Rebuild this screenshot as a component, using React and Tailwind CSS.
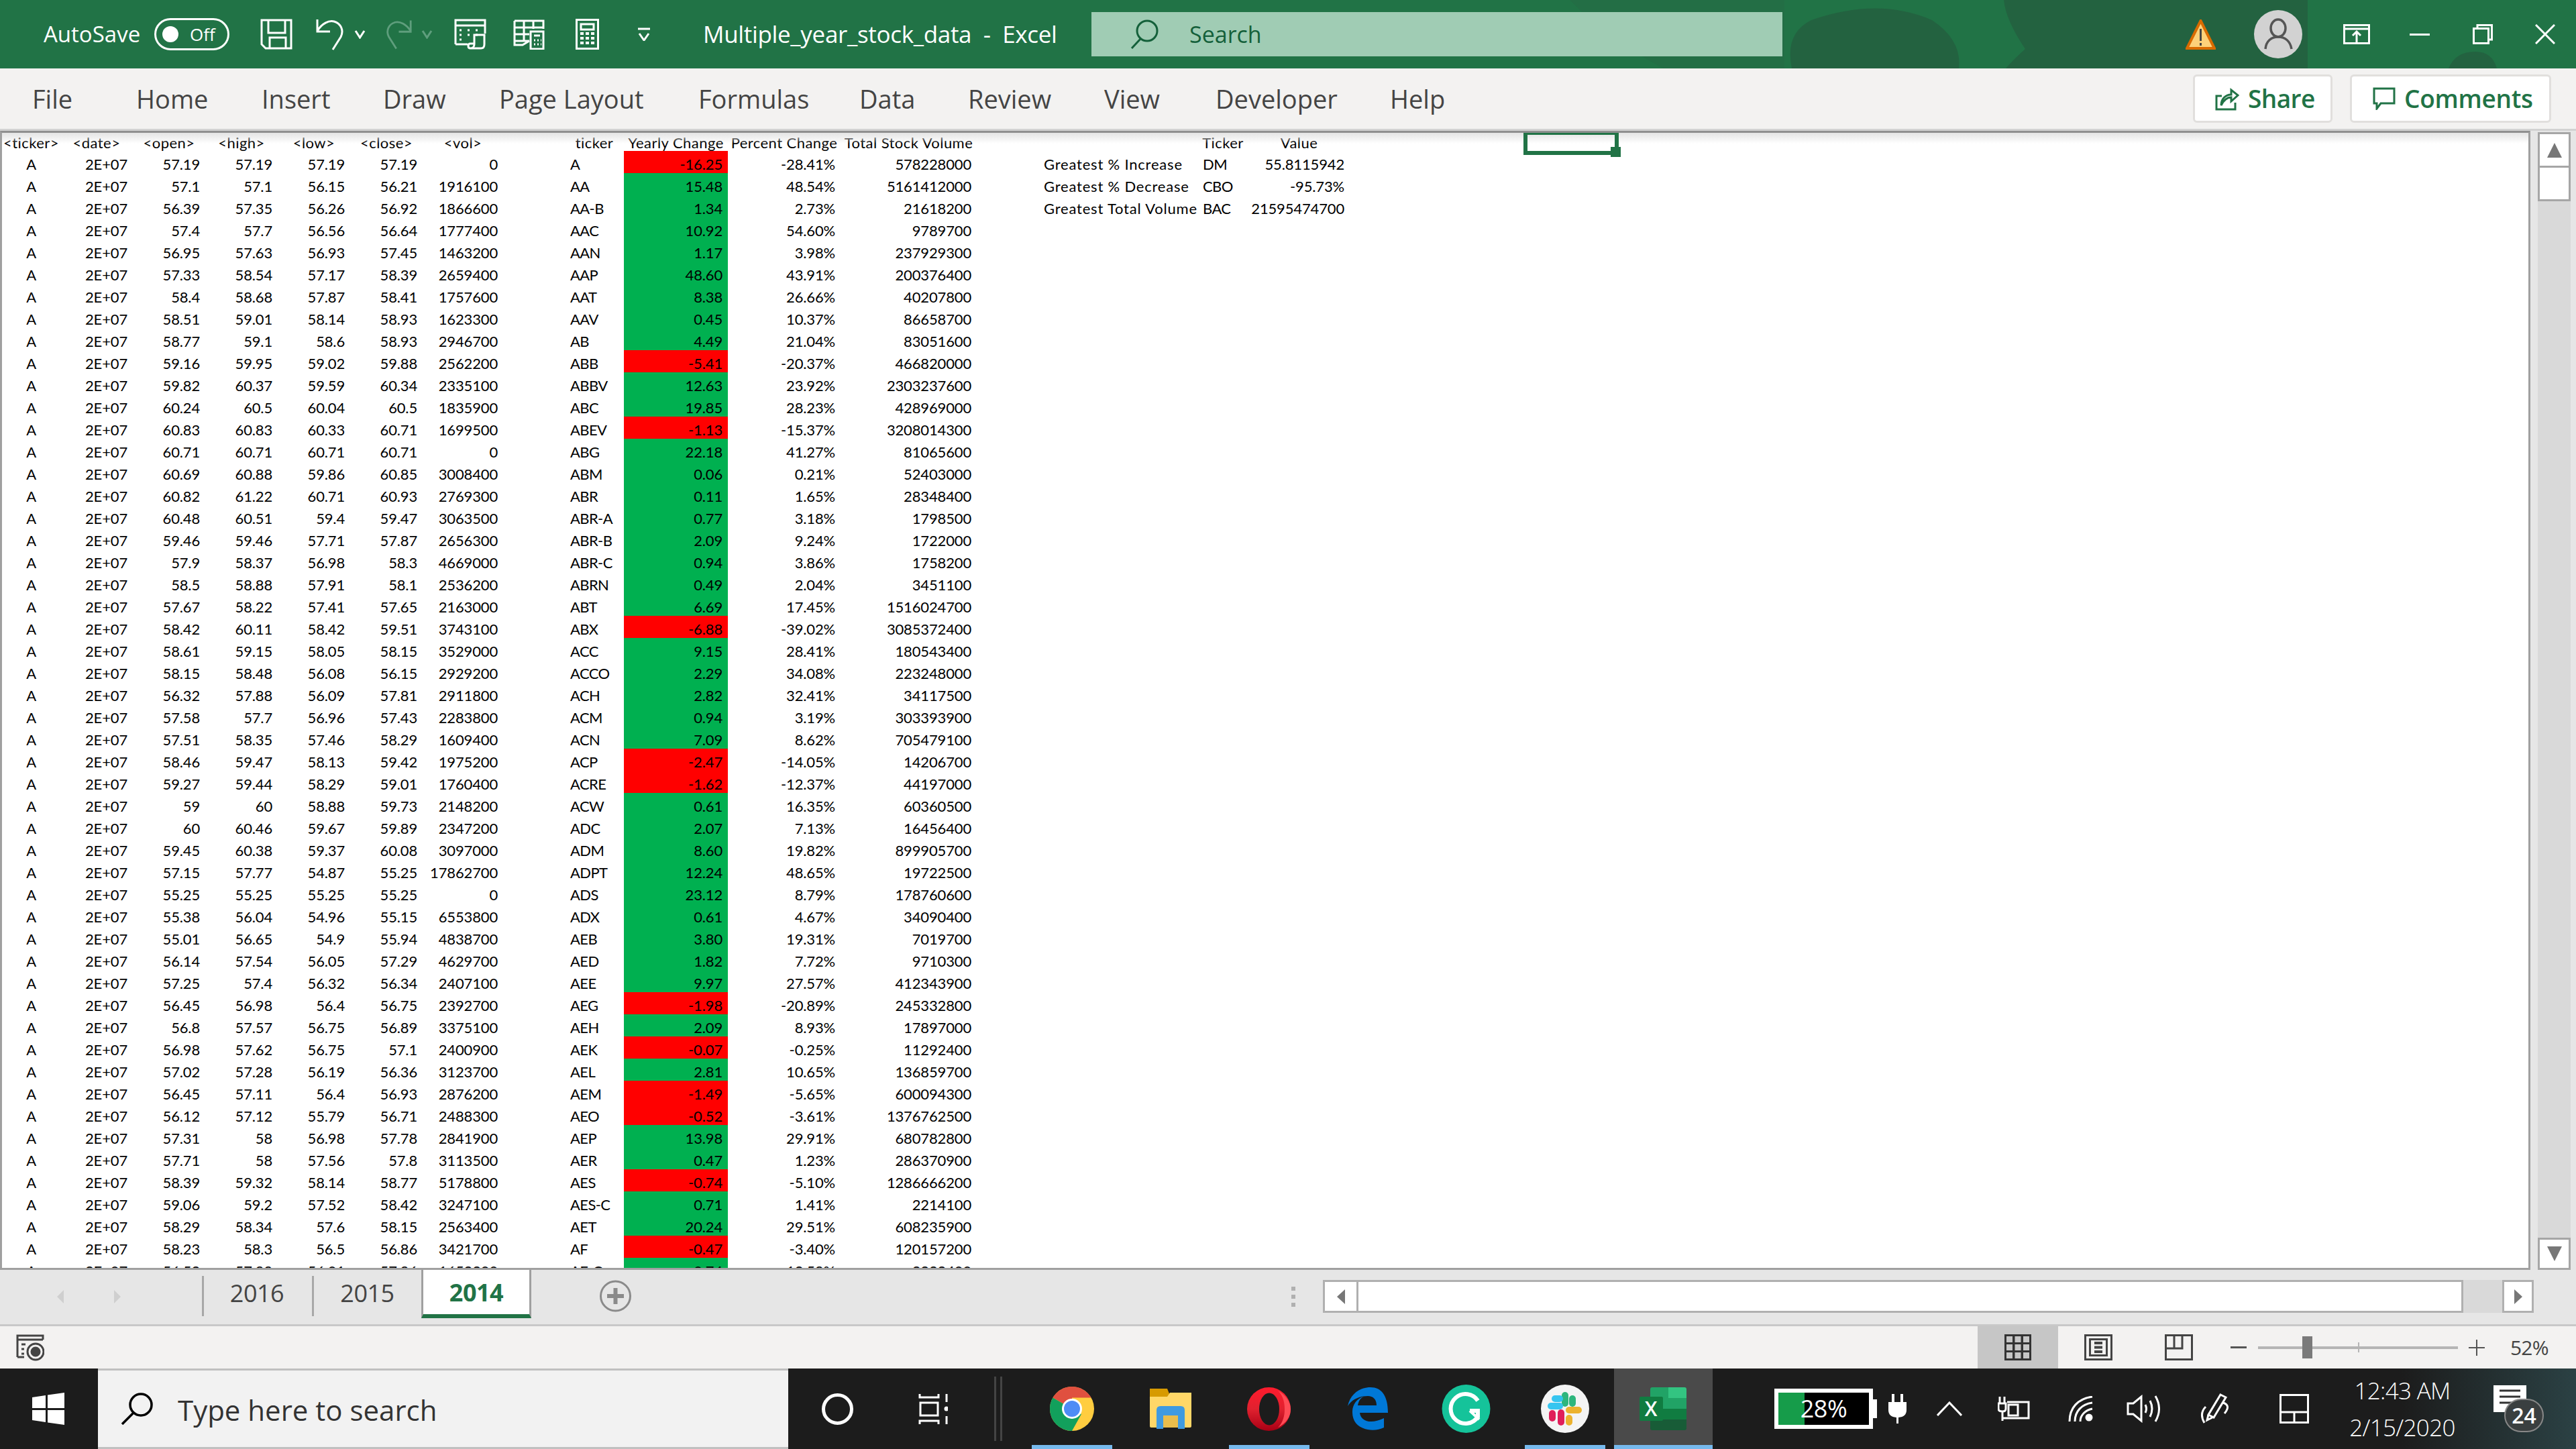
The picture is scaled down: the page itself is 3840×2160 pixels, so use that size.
import React from "react";

const raw = `57.19 57.19 57.19 57.19 0 A -16.25 -28.41% 578228000
57.1 57.1 56.15 56.21 1916100 AA 15.48 48.54% 5161412000
56.39 57.35 56.26 56.92 1866600 AA-B 1.34 2.73% 21618200
57.4 57.7 56.56 56.64 1777400 AAC 10.92 54.60% 9789700
56.95 57.63 56.93 57.45 1463200 AAN 1.17 3.98% 237929300
57.33 58.54 57.17 58.39 2659400 AAP 48.60 43.91% 200376400
58.4 58.68 57.87 58.41 1757600 AAT 8.38 26.66% 40207800
58.51 59.01 58.14 58.93 1623300 AAV 0.45 10.37% 86658700
58.77 59.1 58.6 58.93 2946700 AB 4.49 21.04% 83051600
59.16 59.95 59.02 59.88 2562200 ABB -5.41 -20.37% 466820000
59.82 60.37 59.59 60.34 2335100 ABBV 12.63 23.92% 2303237600
60.24 60.5 60.04 60.5 1835900 ABC 19.85 28.23% 428969000
60.83 60.83 60.33 60.71 1699500 ABEV -1.13 -15.37% 3208014300
60.71 60.71 60.71 60.71 0 ABG 22.18 41.27% 81065600
60.69 60.88 59.86 60.85 3008400 ABM 0.06 0.21% 52403000
60.82 61.22 60.71 60.93 2769300 ABR 0.11 1.65% 28348400
60.48 60.51 59.4 59.47 3063500 ABR-A 0.77 3.18% 1798500
59.46 59.46 57.71 57.87 2656300 ABR-B 2.09 9.24% 1722000
57.9 58.37 56.98 58.3 4669000 ABR-C 0.94 3.86% 1758200
58.5 58.88 57.91 58.1 2536200 ABRN 0.49 2.04% 3451100
57.67 58.22 57.41 57.65 2163000 ABT 6.69 17.45% 1516024700
58.42 60.11 58.42 59.51 3743100 ABX -6.88 -39.02% 3085372400
58.61 59.15 58.05 58.15 3529000 ACC 9.15 28.41% 180543400
58.15 58.48 56.08 56.15 2929200 ACCO 2.29 34.08% 223248000
56.32 57.88 56.09 57.81 2911800 ACH 2.82 32.41% 34117500
57.58 57.7 56.96 57.43 2283800 ACM 0.94 3.19% 303393900
57.51 58.35 57.46 58.29 1609400 ACN 7.09 8.62% 705479100
58.46 59.47 58.13 59.42 1975200 ACP -2.47 -14.05% 14206700
59.27 59.44 58.29 59.01 1760400 ACRE -1.62 -12.37% 44197000
59 60 58.88 59.73 2148200 ACW 0.61 16.35% 60360500
60 60.46 59.67 59.89 2347200 ADC 2.07 7.13% 16456400
59.45 60.38 59.37 60.08 3097000 ADM 8.60 19.82% 899905700
57.15 57.77 54.87 55.25 17862700 ADPT 12.24 48.65% 19722500
55.25 55.25 55.25 55.25 0 ADS 23.12 8.79% 178760600
55.38 56.04 54.96 55.15 6553800 ADX 0.61 4.67% 34090400
55.01 56.65 54.9 55.94 4838700 AEB 3.80 19.31% 7019700
56.14 57.54 56.05 57.29 4629700 AED 1.82 7.72% 9710300
57.25 57.4 56.32 56.34 2407100 AEE 9.97 27.57% 412343900
56.45 56.98 56.4 56.75 2392700 AEG -1.98 -20.89% 245332800
56.8 57.57 56.75 56.89 3375100 AEH 2.09 8.93% 17897000
56.98 57.62 56.75 57.1 2400900 AEK -0.07 -0.25% 11292400
57.02 57.28 56.19 56.36 3123700 AEL 2.81 10.65% 136859700
56.45 57.11 56.4 56.93 2876200 AEM -1.49 -5.65% 600094300
56.12 57.12 55.79 56.71 2488300 AEO -0.52 -3.61% 1376762500
57.31 58 56.98 57.78 2841900 AEP 13.98 29.91% 680782800
57.71 58 57.56 57.8 3113500 AER 0.47 1.23% 286370900
58.39 59.32 58.14 58.77 5178800 AES -0.74 -5.10% 1286666200
59.06 59.2 57.52 58.42 3247100 AES-C 0.71 1.41% 2214100
58.29 58.34 57.6 58.15 2563400 AET 20.24 29.51% 608235900
58.23 58.3 56.5 56.86 3421700 AF -0.47 -3.40% 120157200
56.52 57.88 56.01 57.86 1652300 AF-C 0.74 12.58% 2222400`
  .split("\n")
  .map((l) => l.split(" "));

const GRID =
  "grid grid-cols-[87px_108px_108px_108px_108px_108px_120px_92px_88px_155px_168px_203px_92px_237px_76px_151px]";
const R = "text-right pr-[8px]";
const L = "text-left pl-[8px] tracking-[-0.6px]";
const H = "text-center whitespace-nowrap tracking-[0.45px]";

const side = [
  ["Greatest % Increase", "DM", "55.8115942"],
  ["Greatest % Decrease", "CBO", "-95.73%"],
  ["Greatest Total Volume", "BAC", "21595474700"],
];

function HeaderRow() {
  const heads = ["<ticker>", "<date>", "<open>", "<high>", "<low>", "<close>", "<vol>", "", "ticker", "Yearly Change", "Percent Change", "Total Stock Volume", "", "", "Ticker", "Value"];
  return (
    <div className={`${GRID} h-[27px] leading-[30px]`}>
      {heads.map((h, i) => (
        <div key={i} className={H}>{h}</div>
      ))}
    </div>
  );
}

function Row({ d, i }) {
  const s = side[i];
  const neg = d[6].startsWith("-");
  return (
    <div className={`${GRID} h-[33px] leading-[39px] overflow-hidden`}>
      <div className="text-center">A</div>
      <div className={R}>2E+07</div>
      <div className={R}>{d[0]}</div>
      <div className={R}>{d[1]}</div>
      <div className={R}>{d[2]}</div>
      <div className={R}>{d[3]}</div>
      <div className={R}>{d[4]}</div>
      <div />
      <div className={L}>{d[5]}</div>
      <div className={`${R} ${neg ? "bg-[#ff0000]" : "bg-[#00b050]"}`}>{d[6]}</div>
      <div className={R}>{d[7]}</div>
      <div className={R}>{d[8]}</div>
      <div />
      <div className="text-left pl-[8px] whitespace-nowrap tracking-[0.8px]">{s ? s[0] : ""}</div>
      <div className={L}>{s ? s[1] : ""}</div>
      <div className={R}>{s ? s[2] : ""}</div>
    </div>
  );
}

const W = { stroke: "#fff", strokeWidth: 3, fill: "none" };

function TitleIcons() {
  return (
    <>
      <svg className="ml-[46px] w-[48px] h-[46px] shrink-0" viewBox="0 0 48 46" {...W}>
        <path d="M2 2H46V44H8L2 38Z" />
        <path d="M12 2V21H37V2M14 44V28H38V44" />
      </svg>
      <svg className="ml-[34px] w-[45px] h-[48px] shrink-0" viewBox="0 0 45 48" {...W}>
        <path d="M3 2V20H22M3 19C10 8 20 3 28 5C38 8 43 18 38 28L26 47" />
      </svg>
      <svg className="ml-[13px] w-[17px] h-[14px] shrink-0" viewBox="0 0 17 14" {...W}><path d="M2 2L8.500 12L15 2" /></svg>
      <svg className="ml-[28px] w-[42px] h-[48px] shrink-0" viewBox="0 0 45 48" fill="none" stroke="#5f9e7d" strokeWidth="3">
        <path d="M42 2V20H23M42 19C35 8 25 3 17 5C7 8 2 18 7 28L19 47" />
      </svg>
      <svg className="ml-[13px] w-[17px] h-[14px] shrink-0" viewBox="0 0 17 14" fill="none" stroke="#5f9e7d" strokeWidth="3"><path d="M2 2L8.500 12L15 2" /></svg>
      <svg className="ml-[32px] w-[48px] h-[46px] shrink-0" viewBox="0 0 48 46" {...W}>
        <path d="M2 38V2H46V22M2 10H46M2 38H20" />
        <path d="M8 17H14M20 17H26M32 17H38M8 24H14M8 31H14M20 24H26M32 24H38" strokeDasharray="3 3" />
        <path d="M24 44H40C44 44 45 41 45 38V24H30V38C30 41 28 44 24 44ZM24 44C20 44 20 37 24 37H30" />
      </svg>
      <svg className="ml-[40px] w-[47px] h-[45px] shrink-0" viewBox="0 0 47 45" {...W}>
        <path d="M2 2H45V14M2 2V32M2 12H45M16 2V22M30 2V14M2 22H24M2 32H24M16 22V32M2 32V38H14L24 32" />
        <path d="M26 18H45V44H26Z" />
        <path d="M31 24H40M31 31H33M36 31H38M41 31H42M31 37H33M36 37H38M41 37H42" />
      </svg>
      <svg className="ml-[46px] w-[35px] h-[46px] shrink-0" viewBox="0 0 35 46" {...W}>
        <rect x="1.500" y="1.500" width="32" height="43" />
        <rect x="8" y="8" width="19" height="8" />
        <path d="M7 22H12M15 22H20M23 22H28M7 29H12M15 29H20M23 29H28M7 36H12M15 36H20M23 36H28" strokeWidth="4" />
      </svg>
      <svg className="ml-[57px] w-[20px] h-[20px] shrink-0" viewBox="0 0 20 20" {...W}><path d="M1 2H19M3 9L10 19L17 9" /></svg>
    </>
  );
}

function Chrome() {
  return (
    <svg className="w-[66px] h-[66px]" viewBox="0 0 66 66">
      <circle cx="33" cy="33" r="33" fill="#ffcd40" />
      <path d="M33 33L4.400 16.500A33 33 0 0 1 61.600 16.500H33Z" fill="#e0503f" />
      <path d="M33 33L4.400 16.500A33 33 0 0 0 33 66L47 41Z" fill="#12a05c" />
      <circle cx="33" cy="33" r="15" fill="#fff" />
      <circle cx="33" cy="33" r="12" fill="#4e8cf5" />
    </svg>
  );
}
function Files() {
  return (
    <svg className="w-[62px] h-[60px]" viewBox="0 0 62 60">
      <path d="M0 0H26L30 10V18H0Z" fill="#d79a00" />
      <path d="M0 12H26L30 6H62V56Q62 58 60 58H2Q0 58 0 56Z" fill="#ffd768" />
      <path d="M10 60V32Q10 26 16 26H46Q52 26 52 32V60H42V40H20V60Z" fill="#3f9ae0" />
      <rect x="20" y="40" width="22" height="18" fill="#e9bd4c" />
    </svg>
  );
}
function Opera() {
  return (
    <svg className="w-[65px] h-[65px]" viewBox="0 0 65 65">
      <defs>
        <linearGradient id="op" x1="0" y1="0" x2="0" y2="1">
          <stop offset="0" stopColor="#ff1b2d" />
          <stop offset="0.5" stopColor="#e0212f" />
          <stop offset="1" stopColor="#a70014" />
        </linearGradient>
      </defs>
      <circle cx="32.500" cy="32.500" r="32.500" fill="url(#op)" />
      <path d="M46 5C58 12 65 22 65 32.500C65 44 58 54 46 60C54 52 56 42 56 32.500C56 23 54 13 46 5Z" fill="#ff4b55" />
      <ellipse cx="33" cy="32.500" rx="15" ry="24" fill="#1c1c1c" />
    </svg>
  );
}
function Edge() {
  return (
    <svg className="w-[60px] h-[64px]" viewBox="0 0 60 64">
      <path d="M0 28C4 10 18 0 34 0C50 0 60 12 60 38H18C19 50 34 56 54 46V60C38 68 6 64 7 36C7 26 14 16 24 14C18 16 16 22 15 27H43C43 18 38 13 30 13C18 13 6 18 0 28Z" fill="#0078d7" />
    </svg>
  );
}
function Grammarly() {
  return (
    <svg className="w-[73px] h-[72px]" viewBox="0 0 73 72">
      <circle cx="36.500" cy="36" r="36" fill="#15c39a" />
      <path d="M54 24A22 22 0 1 0 54 48V39H42" fill="none" stroke="#fff" strokeWidth="6" />
      <path d="M42 39L56 52" stroke="#fff" strokeWidth="4" />
    </svg>
  );
}
function Slack() {
  return (
    <svg className="w-[72px] h-[72px]" viewBox="0 0 72 72">
      <circle cx="36" cy="36" r="36" fill="#f4f4f4" />
      <g strokeLinecap="round" strokeWidth="10" fill="none">
        <path d="M36 16V28" stroke="#2eb67d" />
        <path d="M47 21V28" stroke="#2eb67d" />
        <path d="M15 32H28" stroke="#36c5f0" />
        <path d="M21 21H28" stroke="#36c5f0" />
        <path d="M30 42V56" stroke="#e01e5a" />
        <path d="M17 43V50" stroke="#e01e5a" />
        <path d="M42 38H56" stroke="#ecb22e" />
        <path d="M42 50V56" stroke="#ecb22e" />
      </g>
    </svg>
  );
}
function Excel() {
  return (
    <div className="relative w-[72px] h-[64px]">
      <div className="absolute left-[16px] top-0 w-[54px] h-[64px] grid grid-cols-2 grid-rows-4 rounded-[3px] overflow-hidden">
        <div className="bg-[#21a366]" /><div className="bg-[#33c481]" />
        <div className="bg-[#21a366]" /><div className="bg-[#21a366]" />
        <div className="bg-[#107c41]" /><div className="bg-[#107c41]" />
        <div className="bg-[#185c37] col-span-2" />
      </div>
      <div className="absolute left-0 top-[14px] w-[35px] h-[36px] bg-[#107c41] rounded-[2px] flex items-center justify-center text-white text-[30px] font-semibold leading-none">X</div>
    </div>
  );
}

function Slot({ bar, active, children }) {
  return (
    <div className={`relative w-[147px] h-full flex items-center justify-center shrink-0 ${active ? "bg-[#4a4a4a]" : ""}`}>
      {children}
      {bar && <div className={`absolute bottom-0 h-[6px] bg-[#76b9ed] ${active ? "w-full" : "w-[120px]"}`} />}
    </div>
  );
}

export default function App() {
  return (
    <div className="w-[3840px] h-[2160px] overflow-hidden flex flex-col bg-white font-['Open_Sans',sans-serif]">
      {/* Title bar */}
      <div className="relative h-[102px] shrink-0 bg-[#217346] flex items-center pl-[65px] text-white">
        <svg className="absolute left-0 top-0 w-[3840px] h-[102px]" viewBox="0 0 3840 102">
          <path d="M2340 0H2660V102H2480Q2400 60 2340 0Z" fill="#236e45" />
          <path d="M2671 102Q2660 50 2700 30Q2800 -5 2880 30Q2925 60 2920 102Z" fill="#236240" />
          <path d="M2987 0H3440V102H2990Q3000 90 3019 73Q2990 30 2987 0Z" fill="#236240" />
          <path d="M3650 102Q3660 77 3690 77Q3715 77 3722 102Z" fill="#236240" />
        </svg>
        <div className="relative flex items-center">
          <span className="w-[146px] text-[33px] whitespace-nowrap">AutoSave</span>
          <div className="ml-[19px] w-[112px] h-[48px] border-[3px] border-white rounded-full flex items-center pl-[9px] shrink-0">
            <div className="w-[24px] h-[24px] bg-white rounded-full" />
            <span className="ml-[17px] text-[26px] leading-none">Off</span>
          </div>
          <TitleIcons />
          <span className="ml-[78px] w-[526px] text-[35px] whitespace-pre tracking-[-0.33px]">Multiple_year_stock_data  -  Excel</span>
          <div className="ml-[53px] w-[1030px] h-[66px] bg-[#a0ccb4] flex items-center pl-[58px] shrink-0 text-[#14603a]">
            <svg className="w-[42px] h-[44px] shrink-0" viewBox="0 0 42 44" fill="none" stroke="#14603a" strokeWidth="3">
              <circle cx="25" cy="17" r="15" />
              <path d="M15 29L2 43" />
            </svg>
            <span className="ml-[46px] text-[34px]">Search</span>
          </div>
          <svg className="ml-[601px] w-[45px] h-[45px] shrink-0" viewBox="0 0 45 45">
            <path d="M22.500 2L43 43H2Z" fill="#fdd17a" stroke="#d96b00" strokeWidth="4" />
            <path d="M22.500 14V32M22.500 35V39" stroke="#444" strokeWidth="3" />
          </svg>
          <svg className="ml-[57px] w-[72px] h-[72px] shrink-0" viewBox="0 0 72 72">
            <circle cx="36" cy="36" r="36" fill="#d2d2d2" />
            <ellipse cx="36" cy="27" rx="11" ry="13" fill="none" stroke="#555" strokeWidth="3.500" />
            <path d="M17 58C18 46 26 40 36 40C46 40 54 46 56 58" fill="none" stroke="#555" strokeWidth="3.500" />
          </svg>
          <svg className="ml-[61px] w-[40px] h-[30px] shrink-0" viewBox="0 0 40 30" {...W}>
            <rect x="1.500" y="1.500" width="37" height="27" />
            <path d="M2 7H38M20 29V12M14 17L20 11L26 17" />
          </svg>
          <div className="ml-[59px] w-[30px] h-[3px] bg-white shrink-0" />
          <svg className="ml-[64px] w-[30px] h-[30px] shrink-0" viewBox="0 0 30 30" {...W}>
            <rect x="1.500" y="6.500" width="22" height="22" />
            <path d="M7 6V1.500H28.500V23H24" />
          </svg>
          <svg className="ml-[63px] w-[30px] h-[30px] shrink-0" viewBox="0 0 30 30" {...W}>
            <path d="M1 1L29 29M29 1L1 29" />
          </svg>
        </div>
      </div>

      {/* Ribbon tabs */}
      <div className="h-[90px] shrink-0 bg-[#f3f2f1] flex items-center pl-[48px] text-[#444] text-[38px] whitespace-nowrap">
        <span className="w-[155px]">File</span>
        <span className="w-[187px]">Home</span>
        <span className="w-[181px]">Insert</span>
        <span className="w-[173px]">Draw</span>
        <span className="w-[297px]">Page Layout</span>
        <span className="w-[240px]">Formulas</span>
        <span className="w-[162px]">Data</span>
        <span className="w-[203px]">Review</span>
        <span className="w-[166px]">View</span>
        <span className="w-[260px]">Developer</span>
        <span className="w-[100px]">Help</span>
        <div className="ml-auto w-[208px] h-[72px] bg-white border-[3px] border-[#e1dfdd] rounded-[6px] flex items-center pl-[30px] text-[#217346] font-semibold">
          <svg className="w-[36px] h-[36px] shrink-0" viewBox="0 0 36 36" fill="none" stroke="#217346" strokeWidth="3">
            <path d="M10 14H2V34H30V24" />
            <path d="M9 28C9 18 16 12 24 12V5L34 13L24 22V16C18 16 13 20 9 28Z" />
          </svg>
          <span className="ml-[13px] text-[37px] tracking-[-0.6px]">Share</span>
        </div>
        <div className="ml-[26px] mr-[37px] w-[300px] h-[72px] bg-white border-[3px] border-[#e1dfdd] rounded-[6px] flex items-center pl-[31px] text-[#217346] font-semibold">
          <svg className="w-[34px] h-[34px] shrink-0" viewBox="0 0 34 34" fill="none" stroke="#217346" strokeWidth="3">
            <path d="M2 2H32V24H12L6 32V24H2Z" />
          </svg>
          <span className="ml-[13px] text-[37px] tracking-[-0.3px]">Comments</span>
        </div>
      </div>
      <div className="h-[3px] shrink-0 bg-[#d2d2d2]" />

      {/* Sheet */}
      <div className="h-[1698px] shrink-0 flex">
        <div className="relative w-[3772px] shrink-0 border-t-[3px] border-l-[3px] border-r-[3px] border-b-[3px] border-t-[#8f8f8f] border-x-[#a0a0a0] border-b-[#a0a0a0] overflow-hidden text-black text-[22px] tracking-[-0.15px] font-['Lato',sans-serif]">
          <HeaderRow />
          {raw.map((d, i) => (
            <Row key={i} d={d} i={i} />
          ))}
          <div className="absolute left-0 top-0 right-0 h-[16px] bg-gradient-to-b from-[#e4e4e4] to-transparent" />
          <div className="absolute left-[2268px] top-[-3px] w-[142px] h-[36px] border-[6px] border-[#217346]" />
          <div className="absolute left-[2398px] top-[21px] w-[15px] h-[15px] bg-[#217346]" />
        </div>
        <div className="flex-1 bg-[#e6e6e6] pl-[11px] pr-[8px] flex flex-col pt-[2px]">
          <div className="h-[50px] bg-white border-[3px] border-b-0 border-[#a6a6a6] flex items-center justify-center shrink-0">
            <div className="w-0 h-0 border-x-[11px] border-x-transparent border-b-[22px] border-b-[#777]" />
          </div>
          <div className="h-[53px] bg-white border-[3px] border-[#a6a6a6] shrink-0" />
          <div className="flex-1 bg-[#d9d9d9]" />
          <div className="h-[48px] bg-white border-[3px] border-[#a6a6a6] flex items-center justify-center shrink-0">
            <div className="w-0 h-0 border-x-[11px] border-x-transparent border-t-[22px] border-t-[#777]" />
          </div>
        </div>
      </div>

      {/* Sheet tabs and scrollbar */}
      <div className="h-[81px] shrink-0 bg-[#e6e6e6] flex items-start text-[36px] text-[#444] tracking-[-0.5px]">
        <div className="ml-[85px] mt-[30px] w-0 h-0 border-y-[10px] border-y-transparent border-r-[10px] border-r-[#cfcfcf]" />
        <div className="ml-[75px] mt-[30px] w-0 h-0 border-y-[10px] border-y-transparent border-l-[10px] border-l-[#cfcfcf]" />
        <div className="ml-[121px] mt-[9px] w-[3px] h-[60px] bg-[#a8a8a8]" />
        <div className="w-[161px] h-[70px] flex items-center justify-center pr-[3px]">2016</div>
        <div className="mt-[9px] w-[3px] h-[60px] bg-[#a8a8a8]" />
        <div className="w-[160px] h-[70px] flex items-center justify-center pr-[1px]">2015</div>
        <div className="-mt-[3px] w-[164px] h-[75px] bg-white border-x-[3px] border-[#a0a0a0] border-b-[6px] border-b-[#217346] flex items-center justify-center font-bold text-[#217346] pt-[4px]">2014</div>
        <svg className="ml-[102px] mt-[15px] w-[47px] h-[48px] shrink-0" viewBox="0 0 47 48">
          <circle cx="23.500" cy="24" r="22" fill="none" stroke="#8a8a8a" strokeWidth="3" />
          <path d="M23.500 12V36M11 24H36" stroke="#8a8a8a" strokeWidth="6" />
        </svg>
        <div className="ml-[984px] mt-[25px] w-[6px] flex flex-col gap-[6px] shrink-0">
          <div className="h-[6px] bg-[#b0b0b0]" />
          <div className="h-[6px] bg-[#b0b0b0]" />
          <div className="h-[6px] bg-[#b0b0b0]" />
        </div>
        <div className="ml-[41px] mt-[15px] w-[53px] h-[49px] bg-white border-[3px] border-[#b0b0b0] flex items-center justify-center shrink-0">
          <div className="w-0 h-0 border-y-[11px] border-y-transparent border-r-[12px] border-r-[#777]" />
        </div>
        <div className="mt-[15px] w-[1647px] h-[49px] bg-white border-[3px] border-l-0 border-[#b0b0b0] shrink-0" />
        <div className="mt-[15px] w-[58px] h-[49px] bg-[#d9d9d9] shrink-0" />
        <div className="mt-[15px] w-[47px] h-[49px] bg-white border-[3px] border-[#b0b0b0] flex items-center justify-center shrink-0">
          <div className="w-0 h-0 border-y-[11px] border-y-transparent border-l-[12px] border-l-[#777]" />
        </div>
      </div>

      {/* Status bar */}
      <div className="h-[66px] shrink-0 bg-[#f3f2f1] border-t-[3px] border-[#c8c8c8] flex items-center text-[#444]">
        <svg className="ml-[24px] w-[42px] h-[40px] shrink-0" viewBox="0 0 42 40" fill="none" stroke="#444" strokeWidth="3">
          <path d="M2 34V2H40V8M2 8H40M2 34H12" />
          <path d="M8 15H14M8 22H12M8 29H12" />
          <circle cx="29" cy="26" r="12" />
          <circle cx="29" cy="26" r="6" fill="#444" />
        </svg>
        <div className="ml-[2882px] w-[120px] h-full bg-[#c6c6c6] flex items-center justify-center shrink-0">
          <svg className="w-[40px] h-[39px]" viewBox="0 0 40 39">
            <rect x="0" y="0" width="40" height="39" fill="#333" />
            <g fill="#c6c6c6">
              <rect x="3" y="3" width="9" height="9" /><rect x="15.500" y="3" width="9" height="9" /><rect x="28" y="3" width="9" height="9" />
              <rect x="3" y="15" width="9" height="9" /><rect x="15.500" y="15" width="9" height="9" /><rect x="28" y="15" width="9" height="9" />
              <rect x="3" y="27" width="9" height="9" /><rect x="15.500" y="27" width="9" height="9" /><rect x="28" y="27" width="9" height="9" />
            </g>
          </svg>
        </div>
        <svg className="ml-[39px] w-[42px] h-[39px] shrink-0" viewBox="0 0 42 39" fill="none" stroke="#444">
          <rect x="1.500" y="1.500" width="39" height="36" strokeWidth="3" />
          <rect x="8.500" y="7.500" width="25" height="24" strokeWidth="3" />
          <path d="M15 13H27M15 19.500H27M15 26H27" strokeWidth="4" />
        </svg>
        <svg className="ml-[78px] w-[42px] h-[39px] shrink-0" viewBox="0 0 42 39" fill="none" stroke="#444" strokeWidth="3">
          <rect x="1.500" y="1.500" width="39" height="36" />
          <path d="M2 21H26V2M14 2V21" />
        </svg>
        <div className="ml-[56px] w-[24px] h-[3px] bg-[#555] shrink-0" />
        <div className="ml-[17px] w-[298px] h-[4px] bg-[#b5b5b5] shrink-0 flex items-center">
          <div className="ml-[66px] w-[15px] h-[33px] bg-[#7a7a7a] shrink-0" />
          <div className="ml-[68px] w-[2px] h-[15px] bg-[#b5b5b5] shrink-0" />
        </div>
        <svg className="ml-[16px] w-[24px] h-[24px] shrink-0" viewBox="0 0 24 24" stroke="#555" strokeWidth="2">
          <path d="M0 12H24M12 0V24" />
        </svg>
        <span className="ml-[38px] text-[30px] tracking-[-0.8px]">52%</span>
      </div>

      {/* Taskbar */}
      <div className="relative h-[120px] shrink-0 bg-[#1c1c1c] flex items-center text-white">
        <div className="absolute left-[3580px] right-0 top-0 bottom-0 bg-gradient-to-r from-transparent to-[#2b4144]" />
        <svg className="ml-[48px] w-[48px] h-[48px] shrink-0" viewBox="0 0 48 48" fill="#fff">
          <path d="M0 7L20 4V23H0ZM23 3.500L48 0V23H23ZM0 26H20V44L0 41ZM23 26H48V48L23 44.500Z" />
        </svg>
        <div className="ml-[50px] w-[1029px] h-full bg-[#f2f2f2] border-y-[3px] border-[#c0c0c0] flex items-center pl-[34px] shrink-0">
          <svg className="w-[48px] h-[48px] shrink-0" viewBox="0 0 48 48" fill="none" stroke="#000" strokeWidth="3.500">
            <circle cx="30" cy="18" r="16" />
            <path d="M19 30L2 47" />
          </svg>
          <span className="ml-[37px] text-[42px] text-[#333] pt-[2px]">Type here to search</span>
        </div>
        <div className="ml-[50px] w-[47px] h-[47px] rounded-full border-[5px] border-white shrink-0" />
        <svg className="ml-[97px] w-[44px] h-[45px] shrink-0" viewBox="0 0 44 45" fill="none" stroke="#fff" strokeWidth="3">
          <path d="M2 0V5H30V0M2 45V40H30V45" />
          <rect x="3" y="13" width="26" height="19" />
          <path d="M42 0V12M42 33V45" />
          <circle cx="42" cy="22" r="2" fill="#fff" />
        </svg>
        <div className="ml-[69px] w-[12px] h-[96px] border-x-[3px] border-[#444] shrink-0" />
        <div className="ml-[30px] h-full flex shrink-0">
          <Slot bar><Chrome /></Slot>
          <Slot><Files /></Slot>
          <Slot bar><Opera /></Slot>
          <Slot><Edge /></Slot>
          <Slot><Grammarly /></Slot>
          <Slot bar><Slack /></Slot>
          <Slot bar active><Excel /></Slot>
        </div>
        <div className="ml-[92px] w-[147px] h-[60px] border-[6px] border-white bg-black relative flex items-center justify-center shrink-0">
          <div className="absolute left-0 top-0 bottom-0 w-[39px] bg-[#169c4a]" />
          <span className="relative text-[36px] tracking-[-0.5px]">28%</span>
        </div>
        <div className="w-[6px] h-[28px] bg-white shrink-0" />
        <svg className="ml-[17px] w-[27px] h-[44px] shrink-0" viewBox="0 0 27 44" fill="#fff">
          <path d="M5 0H9V12H18V0H22V12H27V24Q27 34 15 35V44H12V35Q0 34 0 24V12H5Z" />
        </svg>
        <svg className="ml-[45px] w-[38px] h-[22px] shrink-0" viewBox="0 0 38 22" {...W}><path d="M1 21L19 2L37 21" /></svg>
        <svg className="ml-[53px] w-[48px] h-[36px] shrink-0" viewBox="0 0 48 36" fill="none" stroke="#fff" strokeWidth="3">
          <path d="M14 8H46V32H8M46 14V26" />
          <path d="M3 0V10M10 0V10M1 10H12V18Q12 22 7 22Q1 22 1 18ZM7 22V36" />
          <rect x="16" y="12" width="14" height="16" />
        </svg>
        <svg className="ml-[57px] w-[37px] h-[38px] shrink-0" viewBox="0 0 37 38" fill="none" stroke="#fff" strokeWidth="3">
          <path d="M2 38C2 18 14 4 36 1M10 38C10 23 20 12 36 10M18 38C18 28 26 21 36 19" />
          <circle cx="31" cy="32" r="5.500" fill="#fff" stroke="none" />
        </svg>
        <svg className="ml-[50px] w-[50px] h-[42px] shrink-0" viewBox="0 0 50 42" fill="none" stroke="#fff" strokeWidth="3">
          <path d="M2 13H10L22 3V39L10 29H2Z" />
          <path d="M28 15Q31 21 28 27M35 9Q41 21 35 33M43 2Q54 21 43 40" />
        </svg>
        <svg className="ml-[58px] w-[47px] h-[46px] shrink-0" viewBox="0 0 47 46" fill="none" stroke="#fff" strokeWidth="3">
          <path d="M32 2L40 6L22 36L14 32ZM14 32L12 40L20 36" />
          <path d="M36 14Q48 18 38 30M10 20Q0 30 8 44" />
        </svg>
        <svg className="ml-[73px] w-[44px] h-[44px] shrink-0" viewBox="0 0 44 44" fill="none" stroke="#fff" strokeWidth="3">
          <rect x="1.500" y="1.500" width="41" height="41" />
          <path d="M2 27H42M22 27V42" />
        </svg>
        <div className="ml-[54px] w-[170px] flex flex-col items-center text-[35px] leading-[55px] whitespace-nowrap shrink-0 relative tracking-[-0.7px] font-light">
          <span>12:43 AM</span>
          <span>2/15/2020</span>
        </div>
        <div className="relative ml-[51px] w-[75px] h-[70px] shrink-0">
          <svg className="absolute left-0 top-0 w-[49px] h-[40px]" viewBox="0 0 49 40" fill="#fff">
            <path d="M0 0H49V40H0Z" />
            <path d="M9 8H40M9 17H40M9 26H40" stroke="#333" strokeWidth="3" />
          </svg>
          <div className="absolute left-[16px] top-[20px] w-[59px] h-[50px] rounded-full bg-[#3a3f40] border-[2px] border-[#888] flex items-center justify-center text-[32px] font-semibold">24</div>
        </div>
      </div>
    </div>
  );
}
